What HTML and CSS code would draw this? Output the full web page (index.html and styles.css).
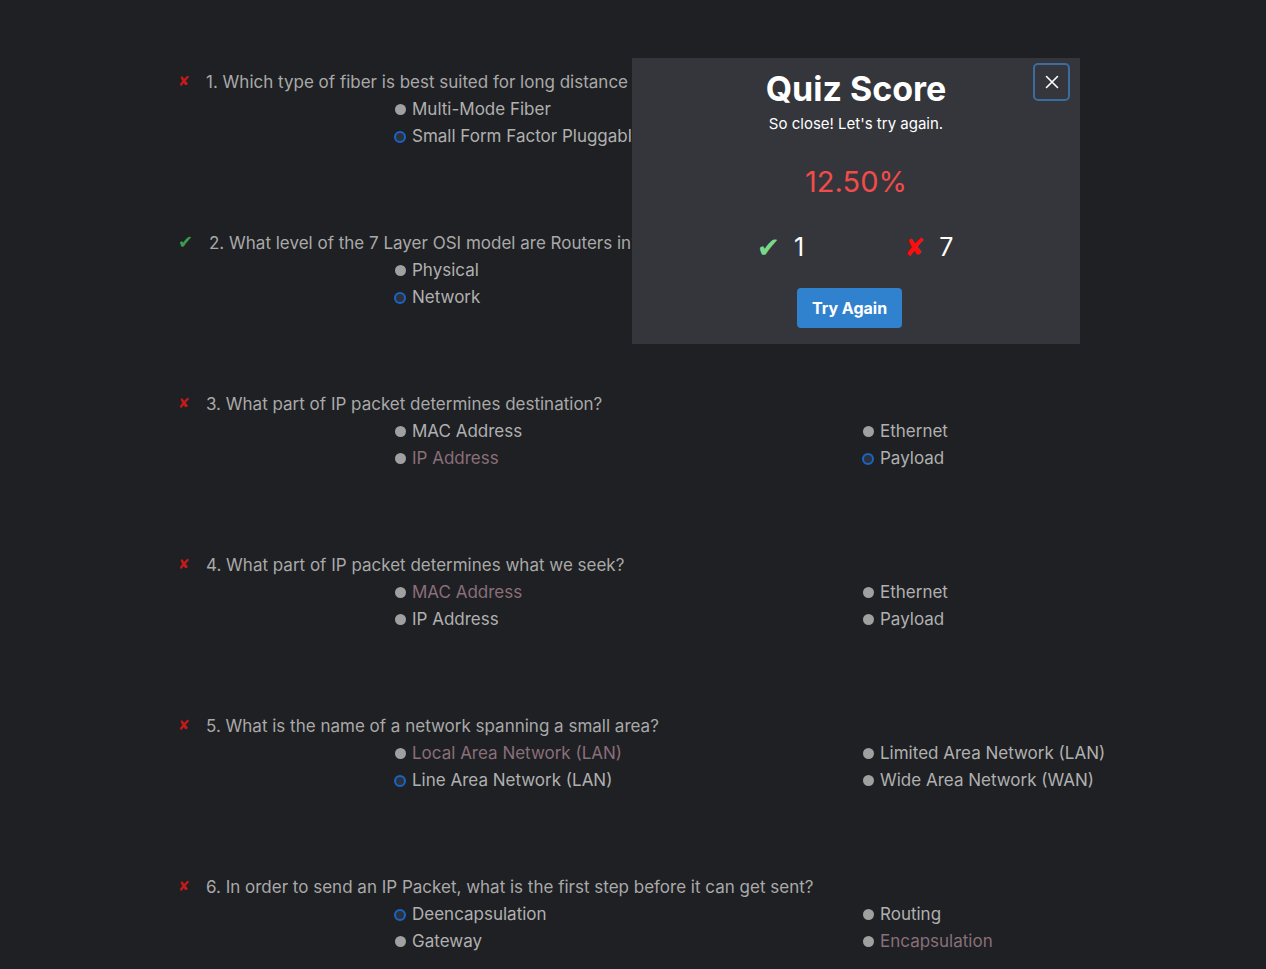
FILE: index.html
```html
<!DOCTYPE html>
<html lang="en">
<head>
<meta charset="utf-8">
<title>Quiz</title>
<link rel="stylesheet" href="styles.css">
</head>
<body>
<main class="quiz">
  <section class="question">
    <div class="q-head"><span class="mark wrong">✘</span><span class="q-text">1. Which type of fiber is best suited for long distance transmission?</span></div>
    <div class="options">
      <div class="opt"><span class="radio"></span><span>Multi-Mode Fiber</span></div>
      <div class="opt"><span class="radio"></span><span>Single-Mode Fiber</span></div>
      <div class="opt"><span class="radio on"></span><span>Small Form Factor Pluggable</span></div>
      <div class="opt"><span class="radio"></span><span>Copper</span></div>
    </div>
  </section>
  <section class="question">
    <div class="q-head"><span class="mark right">✔</span><span class="q-text">2. What level of the 7 Layer OSI model are Routers in?</span></div>
    <div class="options">
      <div class="opt"><span class="radio"></span><span>Physical</span></div>
      <div class="opt"><span class="radio"></span><span>Transport</span></div>
      <div class="opt"><span class="radio on"></span><span>Network</span></div>
      <div class="opt"><span class="radio"></span><span>Data Link</span></div>
    </div>
  </section>
  <section class="question">
    <div class="q-head"><span class="mark wrong">✘</span><span class="q-text">3. What part of IP packet determines destination?</span></div>
    <div class="options">
      <div class="opt"><span class="radio"></span><span>MAC Address</span></div>
      <div class="opt"><span class="radio"></span><span>Ethernet</span></div>
      <div class="opt correct"><span class="radio"></span><span>IP Address</span></div>
      <div class="opt"><span class="radio on"></span><span>Payload</span></div>
    </div>
  </section>
  <section class="question">
    <div class="q-head"><span class="mark wrong">✘</span><span class="q-text">4. What part of IP packet determines what we seek?</span></div>
    <div class="options">
      <div class="opt correct"><span class="radio"></span><span>MAC Address</span></div>
      <div class="opt"><span class="radio"></span><span>Ethernet</span></div>
      <div class="opt"><span class="radio"></span><span>IP Address</span></div>
      <div class="opt"><span class="radio"></span><span>Payload</span></div>
    </div>
  </section>
  <section class="question">
    <div class="q-head"><span class="mark wrong">✘</span><span class="q-text">5. What is the name of a network spanning a small area?</span></div>
    <div class="options">
      <div class="opt correct"><span class="radio"></span><span>Local Area Network (LAN)</span></div>
      <div class="opt"><span class="radio"></span><span>Limited Area Network (LAN)</span></div>
      <div class="opt"><span class="radio on"></span><span>Line Area Network (LAN)</span></div>
      <div class="opt"><span class="radio"></span><span>Wide Area Network (WAN)</span></div>
    </div>
  </section>
  <section class="question">
    <div class="q-head"><span class="mark wrong">✘</span><span class="q-text">6. In order to send an IP Packet, what is the first step before it can get sent?</span></div>
    <div class="options">
      <div class="opt"><span class="radio on"></span><span>Deencapsulation</span></div>
      <div class="opt"><span class="radio"></span><span>Routing</span></div>
      <div class="opt"><span class="radio"></span><span>Gateway</span></div>
      <div class="opt correct"><span class="radio"></span><span>Encapsulation</span></div>
    </div>
  </section>
</main>

<div class="modal" role="dialog" aria-label="Quiz Score">
  <button class="close" aria-label="Close">
    <svg width="14" height="14" viewBox="0 0 14 14"><path d="M1.5 1.5 L12.5 12.5 M12.5 1.5 L1.5 12.5" stroke="#ffffff" stroke-width="1.6" stroke-linecap="round"/></svg>
  </button>
  <h1 class="m-title">Quiz Score</h1>
  <p class="m-sub">So close! Let's try again.</p>
  <div class="m-pct">12.50%</div>
  <div class="m-counts">
    <div class="count"><span class="c-ok">✔</span><span>1</span></div>
    <div class="count"><span class="c-bad">✘</span><span>7</span></div>
  </div>
  <button class="retry">Try Again</button>
</div>
</body>
</html>
```

FILE: styles.css
```css
html, body {
  margin: 0;
  padding: 0;
  background: #1f2023;
  height: 100%;
  overflow: hidden;
}

body {
  font-family: Inter, "Noto Sans", "DejaVu Sans", sans-serif;
  color: #ababab;
}

.quiz {
  padding: 69px 0 0 178px;
  display: flex;
  flex-direction: column;
  gap: 80px;
}

.question {
  display: flex;
  flex-direction: column;
}

.q-head {
  display: flex;
  align-items: center;
  font-size: 17px;
  line-height: 27px;
  white-space: nowrap;
}

.mark {
  width: 28px;
  font-size: 14px;
  line-height: 27px;
  position: relative;
  top: -2px;
}

.mark.wrong { color: #c41a1a; }
.mark.right { color: #3e9b4c; width: 31px; font-size: 18px; }

.q-text { color: #a9a9a9; }

.options {
  margin-left: 216px;
  display: grid;
  grid-template-columns: 468px 380px;
  font-size: 17px;
  line-height: 27px;
}

.opt {
  display: flex;
  align-items: center;
  gap: 6px;
  color: #b0b0b0;
  white-space: nowrap;
}

.opt.correct { color: #8a6f79; }

.radio {
  width: 11px;
  height: 11px;
  border-radius: 50%;
  background: #a0a0a0;
  box-sizing: border-box;
  flex: none;
  margin-left: 1px;
}

.radio.on {
  width: 12px;
  height: 12px;
  margin-left: 0;
  background: #2c323b;
  border: 2.5px solid #1c63c6;
}

.modal {
  position: absolute;
  left: 632px;
  top: 58px;
  width: 448px;
  height: 286px;
  background: #34363b;
  display: flex;
  flex-direction: column;
  align-items: center;
  box-sizing: border-box;
  padding-top: 11px;
}

.close {
  position: absolute;
  top: 5px;
  right: 10px;
  width: 37px;
  height: 38px;
  border: 2px solid #3a6c9e;
  border-radius: 5px;
  background: transparent;
  padding: 0;
  display: flex;
  align-items: center;
  justify-content: center;
  cursor: pointer;
}

.m-title {
  margin: 0;
  font-size: 34px;
  font-weight: 700;
  line-height: 40px;
  color: #ffffff;
}

.m-sub {
  margin: 5px 0 0;
  font-size: 15px;
  line-height: 20px;
  color: #ffffff;
}

.m-pct {
  margin-top: 30px;
  font-size: 29px;
  line-height: 36px;
  color: #f24b4b;
}

.m-counts {
  margin-top: 32px;
  display: flex;
  justify-content: center;
  gap: 100px;
  margin-right: 2px;
  font-size: 25px;
  line-height: 30px;
  color: #ffffff;
}

.count {
  display: flex;
  align-items: center;
  gap: 14px;
}

.c-ok { color: #79d98a; font-size: 28px; }
.c-bad { color: #ff0d0d; font-size: 25px; }

.retry {
  margin-top: 26px;
  margin-right: 13px;
  width: 105px;
  height: 40px;
  border: none;
  border-radius: 4px;
  background: #3182ce;
  color: #ffffff;
  font-family: inherit;
  font-size: 16px;
  font-weight: 700;
  cursor: pointer;
}
```
